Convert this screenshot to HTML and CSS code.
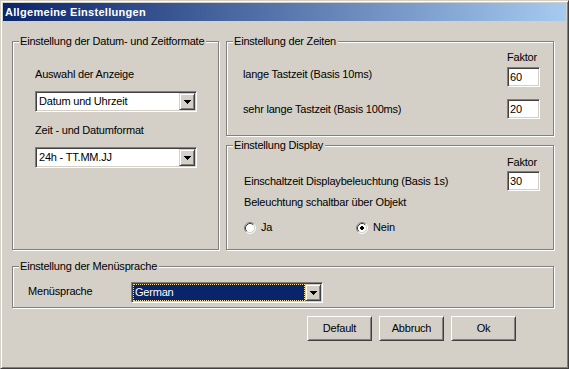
FILE: index.html
```html
<!DOCTYPE html>
<html lang="de">
<head>
  <meta charset="UTF-8" />
  <title>Allgemeine Einstellungen</title>
  <link rel="stylesheet" href="styles.css">
</head>
<body>
  <div class="window">
    <div class="titlebar">Allgemeine Einstellungen</div>

    <div class="client">
      <div class="layout">

        <section class="group g-format">
          <span class="legend">Einstellung der Datum- und Zeitformate</span>
          <div class="label">Auswahl der Anzeige</div>
          <div class="combo combo-first">
            <div class="combo-text">Datum und Uhrzeit</div>
            <div class="combo-btn">
              <svg width="7" height="4" viewBox="0 0 7 4"><path d="M0 0h7v1H0zM1 1h5v1H1zM2 2h3v1H2zM3 3h1v1H3z" fill="#000"/></svg>
            </div>
          </div>
          <div class="label label-second">Zeit - und Datumformat</div>
          <div class="combo combo-first">
            <div class="combo-text">24h - TT.MM.JJ</div>
            <div class="combo-btn">
              <svg width="7" height="4" viewBox="0 0 7 4"><path d="M0 0h7v1H0zM1 1h5v1H1zM2 2h3v1H2zM3 3h1v1H3z" fill="#000"/></svg>
            </div>
          </div>
        </section>

        <section class="group g-zeiten">
          <span class="legend">Einstellung der Zeiten</span>
          <div class="row row-head"><span class="faktor">Faktor</span></div>
          <div class="row row-first">
            <span class="row-label raised">lange Tastzeit (Basis 10ms)</span>
            <div class="field">60</div>
          </div>
          <div class="row row-second">
            <span class="row-label">sehr lange Tastzeit (Basis 100ms)</span>
            <div class="field">20</div>
          </div>
        </section>

        <section class="group g-display">
          <span class="legend">Einstellung Display</span>
          <div class="row row-head"><span class="faktor">Faktor</span></div>
          <div class="row row-tight">
            <span class="row-label">Einschaltzeit Displaybeleuchtung (Basis 1s)</span>
            <div class="field">30</div>
          </div>
          <div class="label label-object">Beleuchtung schaltbar über Objekt</div>
          <div class="radios">
            <label class="radio-option">
              <svg class="radio" width="12" height="12" viewBox="0 0 12 12">
                <circle cx="6" cy="6" r="4.5" fill="#fff"/>
                <path d="M2.11 9.89A5.5 5.5 0 0 1 9.89 2.11" stroke="#808080" fill="none"/>
                <path d="M9.89 2.11A5.5 5.5 0 0 1 2.11 9.89" stroke="#fff" fill="none"/>
                <path d="M2.82 9.18A4.5 4.5 0 0 1 9.18 2.82" stroke="#404040" fill="none"/>
                <path d="M9.18 2.82A4.5 4.5 0 0 1 2.82 9.18" stroke="#d4d0c8" fill="none"/>
              </svg>
              <span>Ja</span>
            </label>
            <label class="radio-option">
              <svg class="radio" width="12" height="12" viewBox="0 0 12 12">
                <circle cx="6" cy="6" r="4.5" fill="#fff"/>
                <path d="M2.11 9.89A5.5 5.5 0 0 1 9.89 2.11" stroke="#808080" fill="none"/>
                <path d="M9.89 2.11A5.5 5.5 0 0 1 2.11 9.89" stroke="#fff" fill="none"/>
                <path d="M2.82 9.18A4.5 4.5 0 0 1 9.18 2.82" stroke="#404040" fill="none"/>
                <path d="M9.18 2.82A4.5 4.5 0 0 1 2.82 9.18" stroke="#d4d0c8" fill="none"/>
                <path d="M5 4h2v1h1v2H7v1H5V7H4V5h1z" fill="#000"/>
              </svg>
              <span>Nein</span>
            </label>
          </div>
        </section>

        <section class="group g-sprache">
          <span class="legend">Einstellung der Menüsprache</span>
          <div class="sprache-row">
            <span class="sprache-label">Menüsprache</span>
            <div class="combo combo-wide">
              <div class="combo-text selected">German</div>
              <div class="combo-btn">
                <svg width="7" height="4" viewBox="0 0 7 4"><path d="M0 0h7v1H0zM1 1h5v1H1zM2 2h3v1H2zM3 3h1v1H3z" fill="#000"/></svg>
              </div>
            </div>
          </div>
        </section>

      </div>

      <div class="buttons">
        <button class="btn">Default</button>
        <button class="btn">Abbruch</button>
        <button class="btn">Ok</button>
      </div>
    </div>
  </div>
</body>
</html>
```

FILE: styles.css
```css
:root {
  --face: #d4d0c8;
  --light: #ffffff;
  --shadow: #808080;
  --dark: #404040;
  --navy: #0a246a;
  --sky: #a6caf0;
}

* {
  margin: 0;
  padding: 0;
  box-sizing: border-box;
}

body {
  font-family: "Liberation Sans", Arial, sans-serif;
  font-size: 11px;
  line-height: 13px;
  letter-spacing: -0.2px;
  color: #000;
  background: var(--face);
}

/* window frame */
.window {
  width: 569px;
  height: 369px;
  padding: 2px;
  background: var(--face);
  border: 1px solid;
  border-color: var(--face) var(--dark) var(--dark) var(--face);
  box-shadow: inset 1px 1px var(--light), inset -1px -1px var(--shadow);
}

.titlebar {
  height: 18px;
  padding-left: 2px;
  line-height: 18px;
  font-size: 11px;
  font-weight: 700;
  letter-spacing: 0.3px;
  color: var(--light);
  background: linear-gradient(to right, var(--navy), var(--sky));
}

.client {
  padding: 20px 0 0 9px;
}

.layout {
  display: grid;
  grid-template-columns: 207px 328px;
  grid-template-rows: 95px 105px 49px;
  column-gap: 7px;
  row-gap: 9px;
}

/* etched group box */
.group {
  position: relative;
  border: 1px solid var(--shadow);
  box-shadow: inset 1px 1px var(--light), 1px 1px var(--light);
}

.legend {
  position: absolute;
  top: -7px;
  left: 6px;
  padding: 0 2px 0 1px;
  background: var(--face);
  white-space: nowrap;
}

.g-format {
  grid-row: 1 / 3;
  padding: 26px 0 0 22px;
}

.g-zeiten {
  padding: 9px 13px 0 16px;
}

.g-display {
  padding: 10px 13px 0 17px;
}

.g-sprache {
  grid-column: 1 / 3;
  margin-top: 7px;
  padding: 15px 0 0 15px;
}

.label-second {
  margin-top: 12px;
}

.combo-first {
  margin-top: 10px;
}

/* sunken fields */
.combo,
.field {
  background: var(--light);
  border: 1px solid;
  border-color: var(--shadow) var(--light) var(--light) var(--shadow);
  box-shadow: inset 1px 1px var(--dark), inset -1px -1px var(--face);
  padding: 1px;
}

.combo {
  display: flex;
  width: 162px;
  height: 21px;
}

.combo-wide {
  width: 192px;
}

.combo-text {
  flex: 1;
  padding-left: 2px;
  line-height: 17px;
  white-space: nowrap;
}

.combo-text.selected {
  padding-left: 2px;
  color: var(--light);
  background: var(--navy);
  outline: 1px dotted #f5db95;
  outline-offset: -1px;
}

.combo-btn {
  width: 16px;
  height: 17px;
  display: flex;
  align-items: center;
  justify-content: center;
  background: var(--face);
  border: 1px solid;
  border-color: var(--face) var(--dark) var(--dark) var(--face);
  box-shadow: inset 1px 1px var(--light), inset -1px -1px var(--shadow);
}

.combo-btn svg {
  display: block;
  margin-top: 1px;
}

.field {
  width: 33px;
  height: 20px;
  padding-left: 2px;
  line-height: 16px;
}

/* label + factor rows */
.row {
  display: flex;
  align-items: center;
  justify-content: space-between;
}

.row-head {
  justify-content: flex-end;
}

.faktor {
  width: 33px;
}

.row-first {
  margin-top: 3px;
}

.row-second {
  margin-top: 12px;
}

.row-tight {
  margin-top: 2px;
}

.row-label.raised {
  margin-bottom: 6px;
}

.label-object {
  margin-top: 5px;
}

.radios {
  display: flex;
  margin-top: 12px;
}

.radio-option {
  display: flex;
  align-items: center;
  gap: 5px;
  width: 112px;
}

.radio {
  display: block;
}

.sprache-row {
  display: flex;
  align-items: center;
}

.sprache-label {
  width: 103px;
  padding-bottom: 3px;
}

/* dialog buttons */
.buttons {
  display: flex;
  justify-content: flex-end;
  gap: 7px;
  width: 542px;
  margin-top: 8px;
  padding-right: 38px;
}

.btn {
  width: 65px;
  height: 25px;
  font: inherit;
  letter-spacing: inherit;
  color: #000;
  background: var(--face);
  border: 1px solid;
  border-color: var(--light) var(--dark) var(--dark) var(--light);
  box-shadow: inset 1px 1px var(--face), inset -1px -1px var(--shadow);
}
```
